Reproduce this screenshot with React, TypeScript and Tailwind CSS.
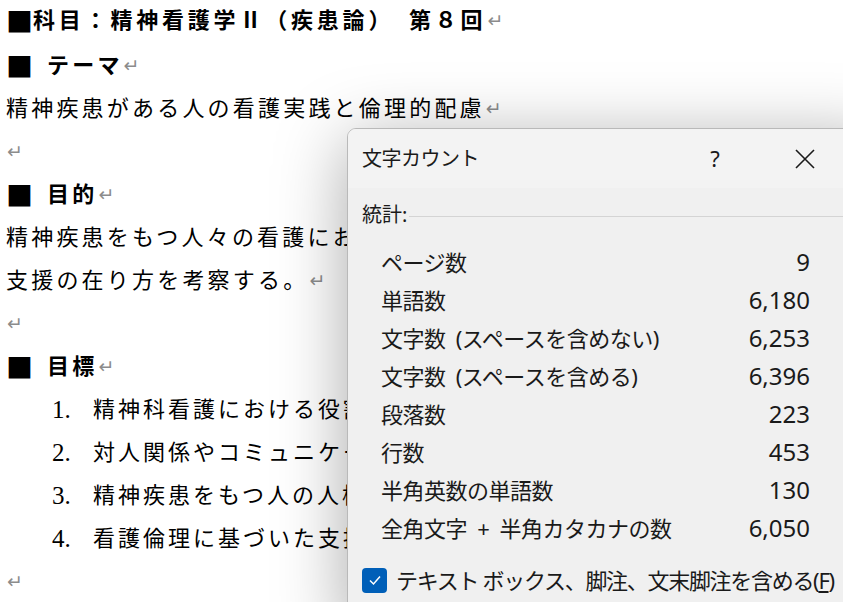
import React from 'react';

const docFont = { fontFamily: '"Liberation Serif", "Noto Sans CJK JP", serif' };
const uiFont = { fontFamily: '"Noto Sans", "Noto Sans CJK JP", sans-serif' };
const cjk = { fontFamily: '"Noto Sans CJK JP", sans-serif' };

function Mark() {
  return (
    <span className="ml-[1px] text-[19px] text-[#8c8c8c] font-normal tracking-normal" style={{ fontFamily: '"DejaVu Sans", sans-serif' }}>
      ↵
    </span>
  );
}

function Square() {
  return (
    <span className="text-[27px] leading-none tracking-normal" style={cjk}>
      ■
    </span>
  );
}

const stats: [string, string][] = [
  ['ページ数', '9'],
  ['単語数', '6,180'],
  ['文字数 (スペースを含めない)', '6,253'],
  ['文字数 (スペースを含める)', '6,396'],
  ['段落数', '223'],
  ['行数', '453'],
  ['半角英数の単語数', '130'],
  ['全角文字 + 半角カタカナの数', '6,050'],
];

const goals = [
  '精神科看護における役割を理解する',
  '対人関係やコミュニケーションの技法を学ぶ',
  '精神疾患をもつ人の人権について考える',
  '看護倫理に基づいた支援を検討する',
];

export default function App() {
  return (
    <div className="relative w-[843px] h-[602px] overflow-hidden bg-white text-black" style={docFont}>
      {/* Document */}
      <div className="pl-[6px] text-[22px] tracking-[3.2px] whitespace-nowrap">
        <div className="h-[44px] flex items-center pb-1 font-bold tracking-[3.8px]">
          <Square />
          <span>科目：精神看護学Ⅱ（疾患論）　第８回</span>
          <Mark />
        </div>
        <div className="h-[43px] flex items-center font-bold">
          <Square />
          <span className="ml-[14px]">テーマ</span>
          <Mark />
        </div>
        <div className="h-[43px] flex items-center">
          <span>精神疾患がある人の看護実践と倫理的配慮</span>
          <Mark />
        </div>
        <div className="h-[43px] flex items-center">
          <Mark />
        </div>
        <div className="h-[43px] flex items-center font-bold">
          <Square />
          <span className="ml-[14px]">目的</span>
          <Mark />
        </div>
        <div className="h-[43px] flex items-center">
          <span>精神疾患をもつ人々の看護における倫理的課題を理解し、</span>
        </div>
        <div className="h-[43px] flex items-center">
          <span>支援の在り方を考察する。</span>
          <Mark />
        </div>
        <div className="h-[43px] flex items-center">
          <Mark />
        </div>
        <div className="h-[43px] flex items-center font-bold">
          <Square />
          <span className="ml-[14px]">目標</span>
          <Mark />
        </div>
        {goals.map((g, i) => (
          <div key={i} className="h-[43px] flex items-center pl-[46px]">
            <span className="w-[41px] text-[25px] tracking-normal">{i + 1}.</span>
            <span className="tracking-[3px]">{g}</span>
          </div>
        ))}
        <div className="h-[43px] flex items-center">
          <Mark />
        </div>
      </div>

      {/* Word count dialog */}
      <div
        className="absolute left-[347px] top-[128px] w-[540px] h-[500px] rounded-tl-[9px] border border-[#b9b9b9] bg-[#f0f0f0] shadow-[0_12px_70px_rgba(0,0,0,0.34)] overflow-hidden text-[#1a1a1a]"
        style={uiFont}
      >
        <div className="h-[59px] bg-[#f3f3f3] flex items-center pl-[14px]">
          <span className="text-[20px] tracking-[-0.5px]">文字カウント</span>
          <span className="ml-auto w-[24px] text-center text-[22px]">?</span>
          <span className="ml-[66px] w-[24px] flex items-center justify-center">
            <svg width="22" height="22" viewBox="0 0 22 22" fill="none" stroke="#1a1a1a" strokeWidth="1.6">
              <path d="M2 2L20 20M20 2L2 20" />
            </svg>
          </span>
          <span className="w-[69px]" />
        </div>
        <div className="pt-[12px] pl-[14px]">
          <div className="h-[30px] flex items-center">
            <span className="text-[20px]">統計:</span>
            <span className="ml-[2px] flex-1 h-px bg-[#d4d4d4] mt-[3px]" />
          </div>
          <div className="mt-[13px] pl-[19px] w-[448px]">
            {stats.map(([label, value]) => (
              <div key={label} className="h-[38px] flex items-center justify-between">
                <span className="text-[22px] tracking-[-0.5px] [word-spacing:5px] whitespace-pre">{label}</span>
                <span className="text-[24px]">{value}</span>
              </div>
            ))}
          </div>
          <div className="mt-[20px] h-[26px] flex items-center">
            <span className="w-[25px] h-[25px] rounded-[4px] bg-[#005fb8] flex items-center justify-center">
              <svg width="14" height="14" viewBox="0 0 14 14" fill="none" stroke="white" strokeWidth="1.5">
                <path d="M2 7.5L5.5 11L12 3.5" />
              </svg>
            </span>
            <span className="ml-[9px] text-[22px] tracking-[-1.3px] whitespace-nowrap">
              テキスト ボックス、脚注、文末脚注を含める(<span className="underline">F</span>)
            </span>
          </div>
        </div>
      </div>
    </div>
  );
}
